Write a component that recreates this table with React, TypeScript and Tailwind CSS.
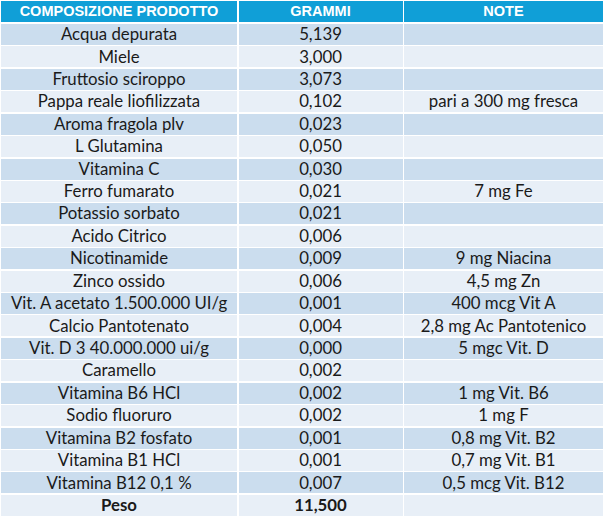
import React from "react";

const rows: [string, string, string][] = [
  ["Acqua depurata", "5,139", ""],
  ["Miele", "3,000", ""],
  ["Fruttosio sciroppo", "3,073", ""],
  ["Pappa reale liofilizzata", "0,102", "pari a 300 mg fresca"],
  ["Aroma fragola plv", "0,023", ""],
  ["L Glutamina", "0,050", ""],
  ["Vitamina C", "0,030", ""],
  ["Ferro fumarato", "0,021", "7 mg Fe"],
  ["Potassio sorbato", "0,021", ""],
  ["Acido Citrico", "0,006", ""],
  ["Nicotinamide", "0,009", "9 mg Niacina"],
  ["Zinco ossido", "0,006", "4,5 mg Zn"],
  ["Vit. A acetato 1.500.000 UI/g", "0,001", "400 mcg Vit A"],
  ["Calcio Pantotenato", "0,004", "2,8 mg Ac Pantotenico"],
  ["Vit. D 3 40.000.000 ui/g", "0,000", "5 mgc Vit. D"],
  ["Caramello", "0,002", ""],
  ["Vitamina B6 HCl", "0,002", "1 mg Vit. B6"],
  ["Sodio fluoruro", "0,002", "1 mg F"],
  ["Vitamina B2 fosfato", "0,001", "0,8 mg Vit. B2"],
  ["Vitamina B1 HCl", "0,001", "0,7 mg Vit. B1"],
  ["Vitamina B12 0,1 %", "0,007", "0,5 mcg Vit. B12"],
];

export default function App() {
  return (
    <div className="w-[606px] h-[518px] bg-white pl-px pt-px font-['Lato',sans-serif] text-[#1a1a1a]">
      <div className="flex flex-col w-[602px]">
        <div className="grid grid-cols-[236px_164px_199px] gap-x-[1.5px] h-[21px] mb-[2px]">
          {["COMPOSIZIONE PRODOTTO", "GRAMMI", "NOTE"].map((h) => (
            <div
              key={h}
              className="bg-[#109fd7] text-white font-bold text-[14.5px] font-['Liberation_Sans',sans-serif] flex items-center justify-center leading-none"
            >
              {h}
            </div>
          ))}
        </div>
        <div className="flex flex-col gap-y-[1.43px]">
          {rows.map((r, i) => {
            const bg = i % 2 === 0 ? "bg-[#cbddee]" : "bg-[#e8eff7]";
            return (
              <div key={i} className="grid grid-cols-[236px_164px_199px] gap-x-[1.5px] h-[21px] text-[16.8px] leading-none">
                {r.map((c, j) => (
                  <div key={j} className={`${bg} flex items-center justify-center whitespace-nowrap`}>
                    {c}
                  </div>
                ))}
              </div>
            );
          })}
          <div className="grid grid-cols-[236px_164px_199px] gap-x-[1.5px] h-[21px] text-[16.8px] leading-none font-bold">
            <div className="bg-[#e8eff7] flex items-center justify-center">Peso</div>
            <div className="bg-[#e8eff7] flex items-center justify-center">11,500</div>
            <div className="bg-[#e8eff7]"></div>
          </div>
        </div>
      </div>
    </div>
  );
}
